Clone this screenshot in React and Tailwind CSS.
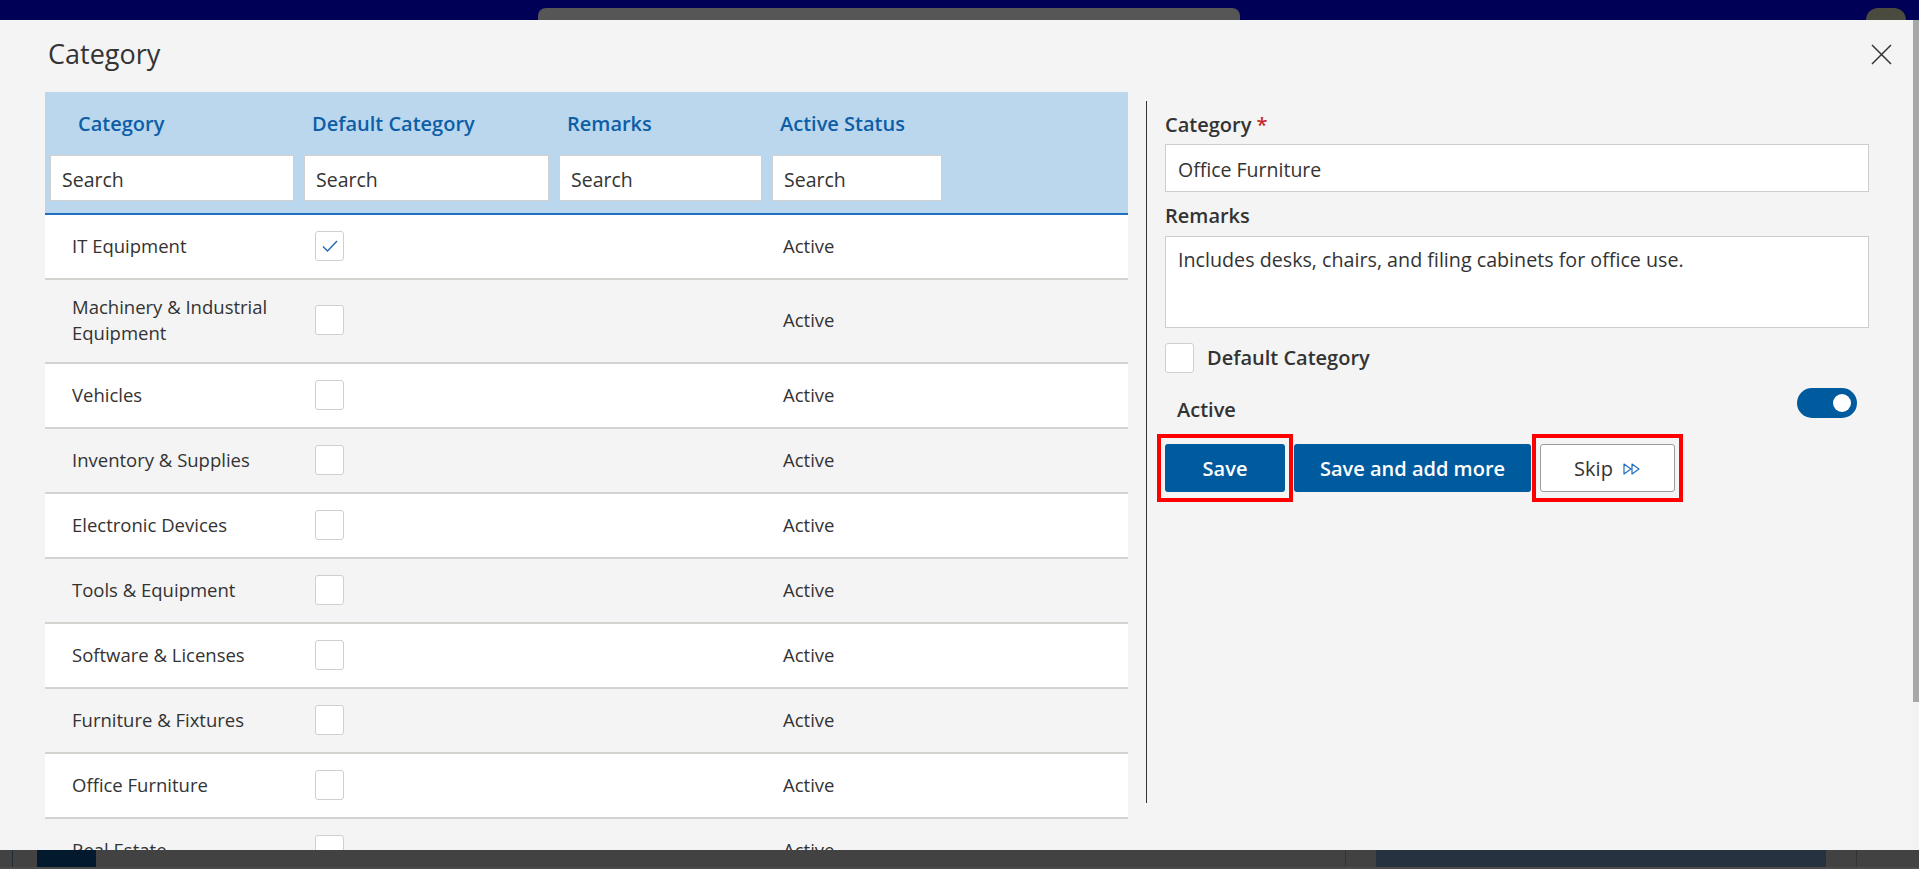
import React from "react";

const rows = [
  { name: "IT Equipment", checked: true },
  { name: "Machinery & Industrial Equipment" },
  { name: "Vehicles" },
  { name: "Inventory & Supplies" },
  { name: "Electronic Devices" },
  { name: "Tools & Equipment" },
  { name: "Software & Licenses" },
  { name: "Furniture & Fixtures" },
  { name: "Office Furniture" },
  { name: "Real Estate" },
];

const cols = "grid grid-cols-[244px_245px_203px_170px_1fr] gap-x-[10px] pl-[5px]";

function Checkbox({ checked }) {
  return (
    <span className="w-[29px] h-[30px] rounded-[3px] border border-[#cfcfcf] bg-white flex items-center justify-center">
      {checked && (
        <svg width="16" height="12" viewBox="0 0 16 12" fill="none">
          <path d="M1 6.5 L5.5 11 L15 1" stroke="#2366b0" strokeWidth="1.4" />
        </svg>
      )}
    </span>
  );
}

function Annotated({ children }) {
  // red highlight box drawn over the button
  return (
    <span className="relative flex">
      {children}
      <span className="absolute -left-[8px] -right-[8px] -top-[10px] -bottom-[10px] border-[4px] border-[#ff0000] pointer-events-none" />
    </span>
  );
}

export default function App() {
  return (
    <div
      className="w-full h-[869px] overflow-hidden bg-[#424242] flex flex-col text-[#333333]"
      style={{ fontFamily: "'Open Sans', 'Noto Sans', sans-serif" }}
    >
      {/* page behind the modal */}
      <div className="h-[20px] bg-[#000057] flex items-end shrink-0">
        <div className="ml-[538px] w-[702px] h-[12px] rounded-t-[8px] bg-[#565656]" />
        <div className="ml-[626px] w-[40px] h-[12px] rounded-t-full bg-[#4b4a3e]" />
      </div>

      <div className="h-[830px] flex shrink-0">
        {/* modal */}
        <div className="w-[1913px] bg-[#f4f4f4] flex flex-col overflow-hidden">
          <div className="flex items-center justify-between pt-[18px] pl-[48px] pr-[21px] mb-[22px]">
            <h1 className="text-[27px] leading-[32px] font-normal text-[#333333]">Category</h1>
            <svg width="21" height="21" viewBox="0 0 21 21" fill="none">
              <path d="M1 1 L20 20 M20 1 L1 20" stroke="#333333" strokeWidth="1.5" />
            </svg>
          </div>

          <div className="flex pl-[45px] flex-1 min-h-0">
            {/* table */}
            <div className="w-[1083px] flex flex-col min-h-0 overflow-hidden">
              <div className="bg-[#bad7ee] border-b-2 border-[#1f6fbe] pt-[18px] pb-[12px]">
                <div className={cols}>
                  <div className="pl-[28px] text-[20px] leading-[28px] font-semibold text-[#0d5ea6]">Category</div>
                  <div className="pl-[8px] text-[20px] leading-[28px] font-semibold text-[#0d5ea6]">Default Category</div>
                  <div className="pl-[8px] text-[20px] leading-[28px] font-semibold text-[#0d5ea6]">Remarks</div>
                  <div className="pl-[8px] text-[20px] leading-[28px] font-semibold text-[#0d5ea6]">Active Status</div>
                </div>
                <div className={cols + " mt-[17px]"}>
                  {[0, 1, 2, 3].map((i) => (
                    <input
                      key={i}
                      placeholder="Search"
                      className="h-[46px] w-full bg-white border border-[#d0d0d0] px-[11px] pt-[3px] text-[19.5px] text-[#333333] placeholder:text-[#333333] outline-none"
                    />
                  ))}
                </div>
              </div>

              {rows.map((r, i) => (
                <div
                  key={r.name}
                  className={`${cols} items-center pt-[14px] pb-[16px] border-b-2 border-[#d3d3cf] shrink-0 ${
                    i % 2 === 0 ? "bg-white" : "bg-[#f4f4f4]"
                  }`}
                >
                  <div className="pl-[22px] pr-[10px] min-h-[33px] flex items-center text-[18.5px] leading-[26px]">
                    {r.name}
                  </div>
                  <div className="pl-[11px] flex items-center">
                    <Checkbox checked={r.checked} />
                  </div>
                  <div />
                  <div className="pl-[11px] text-[18.5px] leading-[26px]">Active</div>
                </div>
              ))}
            </div>

            {/* form */}
            <div className="ml-[18px] mt-[9px] h-[702px] w-[723px] border-l border-[#333333] pl-[18px] pt-[10px] flex flex-col">
              <label className="text-[20px] leading-[28px] font-semibold">
                Category <span className="text-[#c62828]">*</span>
              </label>
              <input
                defaultValue="Office Furniture"
                className="mt-[5px] h-[48px] w-full bg-white border border-[#cdcdcd] px-[12px] pt-[3px] text-[19.5px] text-[#333333] outline-none"
              />
              <label className="mt-[10px] text-[20px] leading-[28px] font-semibold">Remarks</label>
              <textarea
                defaultValue="Includes desks, chairs, and filing cabinets for office use."
                className="mt-[6px] h-[92px] w-full bg-white border border-[#cdcdcd] px-[12px] pt-[10px] text-[19.7px] leading-[26px] text-[#333333] resize-none outline-none"
              />
              <div className="mt-[15px] flex items-center gap-[13px]">
                <Checkbox />
                <span className="text-[20px] leading-[28px] font-semibold">Default Category</span>
              </div>
              <div className="mt-[15px] flex items-start justify-between pr-[12px]">
                <span className="pl-[12px] mt-[8px] text-[20px] leading-[28px] font-semibold">Active</span>
                <span className="w-[60px] h-[30px] rounded-full bg-[#005a9e] flex items-center justify-end pr-[6px]">
                  <span className="w-[18px] h-[18px] rounded-full bg-white" />
                </span>
              </div>
              <div className="mt-[20px] flex gap-[9px]">
                <Annotated>
                  <button className="w-[120px] h-[48px] rounded-[3px] bg-[#005a9e] text-white text-[20px] font-semibold pt-[2px]">
                    Save
                  </button>
                </Annotated>
                <button className="w-[237px] h-[48px] rounded-[3px] bg-[#005a9e] text-white text-[20px] font-semibold pt-[2px]">
                  Save and add more
                </button>
                <Annotated>
                  <button className="w-[135px] h-[48px] rounded-[3px] bg-white border border-[#9a9a9a] text-[#333333] text-[20px] font-normal pt-[2px] flex items-center justify-center gap-[10px]">
                    Skip
                    <svg width="18" height="12" viewBox="0 0 18 12" fill="none">
                      <path d="M1 1 L8 6 L1 11 Z M9 1 L16 6 L9 11 Z" stroke="#1f6fbe" strokeWidth="1.2" strokeLinejoin="round" />
                    </svg>
                  </button>
                </Annotated>
              </div>
            </div>
          </div>
        </div>

        {/* scrollbar */}
        <div className="w-[6px] flex flex-col">
          <div className="h-[682px] bg-[#a8a8a8]" />
          <div className="flex-1 bg-[#f2f2f2]" />
        </div>
      </div>

      {/* page behind, bottom */}
      <div className="flex-1 min-h-0 flex bg-[#424242] border-b-2 border-[#4c4c4c]">
        <div className="w-[12px]" />
        <div className="w-px bg-[#1d2b3b]" />
        <div className="w-[24px]" />
        <div className="w-[59px] bg-[#03192d]" />
        <div className="w-[1249px]" />
        <div className="w-px bg-[#333333]" />
        <div className="w-[30px]" />
        <div className="w-[450px] bg-[#26323f]" />
        <div className="w-[30px]" />
        <div className="w-px bg-[#333333]" />
      </div>
    </div>
  );
}
